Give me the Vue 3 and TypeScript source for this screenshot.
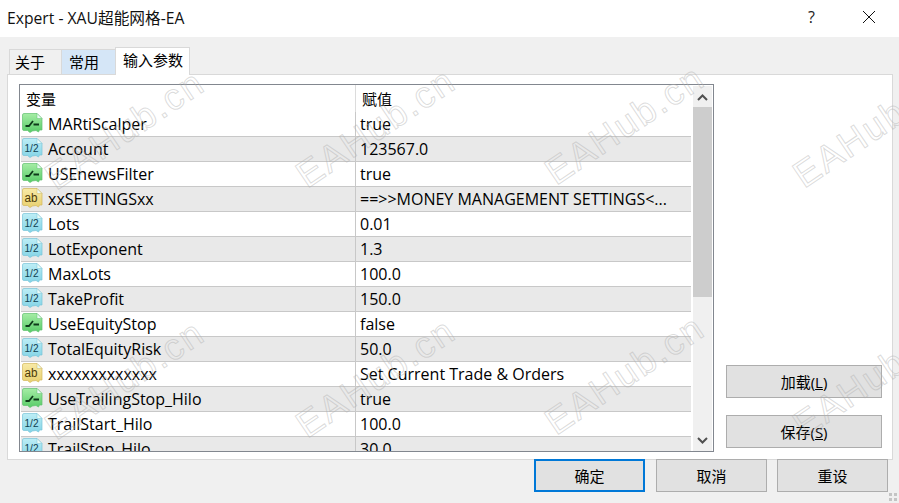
<script setup lang="ts">
type Kind = 'bool' | 'num' | 'str'
interface Row { name: string; value: string; kind: Kind }
const rows: Row[] = [
  { name: 'MARtiScalper', value: 'true', kind: 'bool' },
  { name: 'Account', value: '123567.0', kind: 'num' },
  { name: 'USEnewsFilter', value: 'true', kind: 'bool' },
  { name: 'xxSETTINGSxx', value: '==>>MONEY MANAGEMENT SETTINGS<...', kind: 'str' },
  { name: 'Lots', value: '0.01', kind: 'num' },
  { name: 'LotExponent', value: '1.3', kind: 'num' },
  { name: 'MaxLots', value: '100.0', kind: 'num' },
  { name: 'TakeProfit', value: '150.0', kind: 'num' },
  { name: 'UseEquityStop', value: 'false', kind: 'bool' },
  { name: 'TotalEquityRisk', value: '50.0', kind: 'num' },
  { name: 'xxxxxxxxxxxxx', value: 'Set Current Trade & Orders', kind: 'str' },
  { name: 'UseTrailingStop_Hilo', value: 'true', kind: 'bool' },
  { name: 'TrailStart_Hilo', value: '100.0', kind: 'num' },
  { name: 'TrailStop_Hilo', value: '30.0', kind: 'num' },
]
const palette: Record<Kind, { top: string; bottom: string; edge: string }> = {
  bool: { top: '#a5eda5', bottom: '#58cc68', edge: '#62c070' },
  num: { top: '#bdeef6', bottom: '#84d4e6', edge: '#78c4d8' },
  str: { top: '#f8eaa6', bottom: '#e8d070', edge: '#d2b85c' },
}
const marks = [
  { x: 125, y: 130 }, { x: 376, y: 128 }, { x: 625, y: 125 }, { x: 873, y: 128 },
  { x: 125, y: 380 }, { x: 376, y: 378 }, { x: 625, y: 375 }, { x: 873, y: 378 },
]
</script>

<template>
  <div class="dialog">
    <header class="titlebar">
      <span class="title">Expert - XAU超能网格-EA</span>
      <span class="help">?</span>
      <svg class="close" width="14" height="14" viewBox="0 0 14 14">
        <path d="M1 1 L13 13 M13 1 L1 13" stroke="#111" stroke-width="1" fill="none" />
      </svg>
    </header>

    <div class="body">
      <nav class="tabs">
        <span class="tab">关于</span>
        <span class="tab hover">常用</span>
        <span class="tab active">输入参数</span>
      </nav>

      <section class="panel">
        <div class="listbox">
          <div class="table">
            <div class="head">
              <span class="hname">变量</span>
              <span class="hvalue">赋值</span>
            </div>
            <div v-for="(r, i) in rows" :key="r.name" class="row" :class="{ alt: i % 2 === 1 }">
              <span class="cname">
                <svg class="icon" width="22" height="22" viewBox="0 0 22 22">
                  <defs>
                    <linearGradient :id="'g' + r.kind + i" x1="0" y1="0" x2="0" y2="1">
                      <stop offset="0" :stop-color="palette[r.kind].top" />
                      <stop offset="1" :stop-color="palette[r.kind].bottom" />
                    </linearGradient>
                  </defs>
                  <path
                    d="M1.5 3 Q1.5 1.5 3 1.5 L16 1.5 L21 6.5 L21 18 L18.5 18 L17.5 20 L15 18.5 L11.5 19 L9 20.5 L6.5 18.5 L3 18.5 Q1.5 18.5 1.5 17 Z"
                    :fill="'url(#g' + r.kind + i + ')'"
                    :stroke="palette[r.kind].edge"
                    stroke-width="0.7"
                  />
                  <path d="M16 1.5 L16 6.5 L21 6.5 Z" fill="#eafaf5" :stroke="palette[r.kind].edge" stroke-width="0.5" />
                  <template v-if="r.kind === 'bool'">
                    <path d="M4.5 14 L8 14 L12 9 M12.5 12.5 L18 12.5" stroke="#0e3a1a" stroke-width="1.8" fill="none" />
                  </template>
                  <text v-else-if="r.kind === 'num'" x="3.5" y="14.5" class="glyph" textLength="14" lengthAdjust="spacingAndGlyphs">1/2</text>
                  <text v-else x="3.5" y="14.5" class="glyph ab" textLength="13" lengthAdjust="spacingAndGlyphs">ab</text>
                </svg>
                <span class="nametext">{{ r.name }}</span>
              </span>
              <span class="cvalue">{{ r.value }}</span>
            </div>
          </div>
          <div class="scrollbar">
            <svg class="arrow" width="19" height="21" viewBox="0 0 19 21">
              <path d="M5 14 L9.5 9.5 L14 14" stroke="#505050" stroke-width="2" fill="none" />
            </svg>
            <div class="thumb"></div>
            <div class="track"></div>
            <svg class="arrow" width="19" height="21" viewBox="0 0 19 21">
              <path d="M5 8 L9.5 12.5 L14 8" stroke="#505050" stroke-width="2" fill="none" />
            </svg>
          </div>
        </div>
        <aside class="side">
          <button class="btn wide">加载(<u>L</u>)</button>
          <button class="btn wide">保存(<u>S</u>)</button>
        </aside>
      </section>

      <footer class="footer">
        <button class="btn foot primary">确定</button>
        <button class="btn foot">取消</button>
        <button class="btn foot">重设</button>
      </footer>
      <div class="grip">
        <i></i><i></i><i></i><i></i>
      </div>
    </div>

    <span
      v-for="(m, i) in marks"
      :key="i"
      class="mark"
      :style="{ left: m.x + 'px', top: m.y + 'px' }"
    >EAHub.cn</span>
  </div>
</template>

<style scoped>
.dialog {
  position: relative;
  width: 899px;
  height: 503px;
  overflow: hidden;
  display: flex;
  flex-direction: column;
  background: #f0f0f0;
  font-family: "Open Sans", "Noto Sans CJK SC", sans-serif;
  font-size: 16px;
  color: #000;
}
.titlebar {
  box-sizing: border-box;
  height: 37px;
  flex: none;
  background: #fff;
  display: flex;
  align-items: center;
  padding: 0 8px 3px 7px;
}
.title {
  flex: 1;
  font-size: 15.7px;
  color: #111;
}
.help {
  font-size: 16px;
  margin-right: 47px;
  color: #222;
}
.close {
  margin-right: 15px;
}
.body {
  position: relative;
  flex: 1;
  padding: 10px 6px 0 7px;
  display: flex;
  flex-direction: column;
}
.tabs {
  display: flex;
  height: 27px;
  align-items: flex-end;
  padding-left: 2px;
  position: relative;
  z-index: 1;
}
.tab {
  box-sizing: border-box;
  width: 53px;
  height: 25px;
  border: 1px solid #d9d9d9;
  border-bottom: none;
  background: #f0f0f0;
  font-size: 15px;
  line-height: 24px;
  padding-left: 5px;
}
.tab.hover {
  background: #d5e6f7;
  padding-left: 7px;
  border-left: none;
  border-right: none;
}
.tab.active {
  width: 75px;
  height: 28px;
  background: #fff;
  line-height: 25px;
  padding-left: 7px;
  margin-bottom: -1px;
}
.panel {
  box-sizing: border-box;
  height: 386px;
  background: #fff;
  border: 1px solid #d9d9d9;
  display: flex;
  padding: 9px 10px 7px 11px;
  gap: 12px;
}
.listbox {
  box-sizing: border-box;
  width: 695px;
  height: 368px;
  border: 1px solid #82878f;
  display: flex;
  padding-left: 1px;
  overflow: hidden;
  flex: none;
}
.table {
  width: 670px;
  flex: none;
  overflow: hidden;
}
.head {
  display: flex;
  height: 27px;
  align-items: center;
}
.hname {
  width: 335px;
  padding-left: 5px;
  box-sizing: border-box;
  flex: none;
  height: 100%;
  line-height: 28px;
  font-size: 15px;
  border-right: 1px solid #dcdcdc;
}
.hvalue {
  padding-left: 6px;
  font-size: 15px;
}
.row {
  box-sizing: border-box;
  display: flex;
  height: 25px;
  border-bottom: 1px solid #c8c8c8;
  background: #fff;
  line-height: 24px;
}
.row.alt {
  background: #e9e9e9;
}
.cname {
  box-sizing: border-box;
  width: 335px;
  flex: none;
  display: flex;
  align-items: center;
  border-right: 1px solid #c8c8c8;
}
.icon {
  flex: none;
  margin: 0 5px 2px 0;
}
.nametext {
  white-space: nowrap;
}
.cvalue {
  padding-left: 4px;
  white-space: nowrap;
}
.glyph {
  font-family: "Liberation Sans", sans-serif;
  font-size: 11px;
  fill: #0f4050;
}
.glyph.ab {
  fill: #4d3c08;
  font-size: 12px;
}
.scrollbar {
  width: 19px;
  flex: none;
  margin: 1px 0 0 1px;
  background: #f0f0f0;
  display: flex;
  flex-direction: column;
  border-left: 1px solid #fff;
}
.arrow {
  flex: none;
}
.thumb {
  height: 190px;
  flex: none;
  background: #cdcdcd;
}
.track {
  flex: 1;
}
.side {
  flex: 1;
  display: flex;
  flex-direction: column;
  justify-content: flex-end;
  gap: 17px;
  padding-bottom: 4px;
}
.btn {
  box-sizing: border-box;
  background: #e1e1e1;
  border: 1px solid #adadad;
  border-radius: 0;
  font: inherit;
  font-size: 15px;
  color: #000;
  padding: 0;
}
.wide {
  width: 156px;
  height: 33px;
}
.footer {
  display: flex;
  justify-content: flex-end;
  gap: 10px;
  padding-right: 5px;
  margin-top: -1px;
}
.foot {
  width: 111px;
  height: 33px;
}
.primary {
  border: 2px solid #0078d7;
  margin-right: 1px;
}
.grip {
  position: absolute;
  right: 2px;
  bottom: 2px;
  display: grid;
  grid-template-columns: 3px 3px;
  gap: 2px;
}
.grip i {
  width: 3px;
  height: 3px;
  background: #c4c4c4;
}
.mark {
  position: absolute;
  transform: translate(-50%, -50%) rotate(-34deg);
  font-family: "Liberation Sans", sans-serif;
  font-size: 37px;
  letter-spacing: 2px;
  white-space: nowrap;
  color: transparent;
  -webkit-text-stroke: 1px rgba(175, 175, 175, 0.45);
  pointer-events: none;
}
</style>
